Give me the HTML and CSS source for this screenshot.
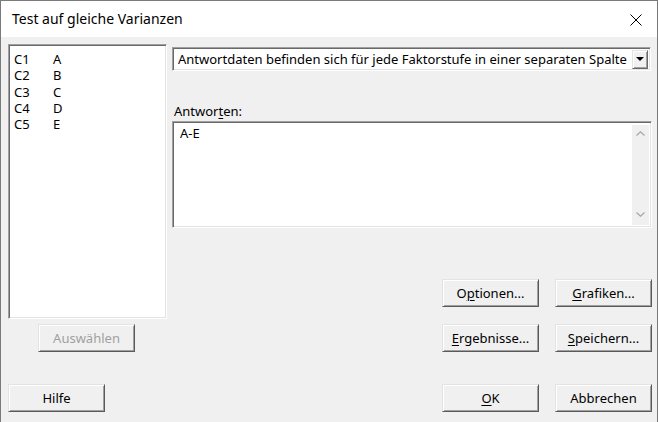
FILE: index.html
```html
<!DOCTYPE html>
<html lang="de">
<head>
<meta charset="utf-8">
<title>Test auf gleiche Varianzen</title>
<link rel="stylesheet" href="styles.css">
</head>
<body>
<div class="window">
  <div class="titlebar">
    <span class="title">Test auf gleiche Varianzen</span>
    <svg class="close" viewBox="0 0 12 12" width="12" height="12"><path d="M0.5 0.5 L11.5 11.5 M11.5 0.5 L0.5 11.5" stroke="#000" stroke-width="1" fill="none"/></svg>
  </div>
  <div class="body">
    <div class="left">
      <div class="list sunken">
        <div class="row"><span class="col">C1</span><span>A</span></div>
        <div class="row"><span class="col">C2</span><span>B</span></div>
        <div class="row"><span class="col">C3</span><span>C</span></div>
        <div class="row"><span class="col">C4</span><span>D</span></div>
        <div class="row"><span class="col">C5</span><span>E</span></div>
      </div>
      <div class="btn disabled select">Auswählen</div>
      <div class="btn help">Hilfe</div>
    </div>
    <div class="right">
      <div class="combo sunken">
        <span class="combo-text">Antwortdaten befinden sich für jede Faktorstufe in einer separaten Spalte</span>
        <span class="drop"><svg viewBox="0 0 8 4" width="8" height="4"><path d="M0 0 H8 L4 4 Z" fill="#000"/></svg></span>
      </div>
      <div class="label">Antwor<u>t</u>en:</div>
      <div class="textarea sunken">
        <div class="ta-text">A-E</div>
        <div class="scroll">
          <svg viewBox="0 0 9 5" width="9" height="5"><path d="M0.5 4.5 L4.5 0.8 L8.5 4.5" stroke="#a6a6a6" stroke-width="1.2" fill="none"/></svg>
          <svg viewBox="0 0 9 5" width="9" height="5"><path d="M0.5 0.5 L4.5 4.2 L8.5 0.5" stroke="#a6a6a6" stroke-width="1.2" fill="none"/></svg>
        </div>
      </div>
      <div class="buttons">
        <div class="btn">O<u>p</u>tionen...</div>
        <div class="btn"><u>G</u>rafiken...</div>
        <div class="btn row2"><u>E</u>rgebnisse...</div>
        <div class="btn row2"><u>S</u>peichern...</div>
        <div class="btn row3"><u>O</u>K</div>
        <div class="btn row3">Abbrechen</div>
      </div>
    </div>
  </div>
</div>
</body>
</html>
```

FILE: styles.css
```css
* { box-sizing: border-box; }

body {
  margin: 0;
  font-family: "Noto Sans", "DejaVu Sans", sans-serif;
  font-size: 13px;
  color: #000;
}

.window {
  width: 658px;
  height: 422px;
  border: 1px solid #7a7a7a;
  border-bottom: none;
  background: #f0f0f0;
  display: flex;
  flex-direction: column;
}

.titlebar {
  height: 36px;
  background: #fff;
  display: flex;
  align-items: center;
  justify-content: space-between;
  padding: 0 15px 0 11px;
}

.title {
  font-size: 14px;
  padding-bottom: 2px;
}

.close { display: block; margin-top: 2px; }

.body {
  flex: 1;
  display: flex;
}

.left {
  width: 171px;
  padding: 7px 0 0 7px;
  display: flex;
  flex-direction: column;
  align-items: flex-start;
}

.sunken {
  background: #fff;
  border: 1px solid;
  border-color: #a0a0a0 #fff #fff #a0a0a0;
  box-shadow: inset 1px 1px 0 #696969, inset -1px -1px 0 #e3e3e3;
}

.list {
  width: 159px;
  height: 275px;
  padding: 6px 0 0 5px;
}

.row {
  display: flex;
  height: 16.25px;
  line-height: 16px;
}

.row .col { width: 39px; }

.btn {
  width: 97px;
  height: 28px;
  display: flex;
  align-items: center;
  justify-content: center;
  background: #f0f0f0;
  border: 1px solid;
  border-color: #e3e3e3 #5a5a5a #5a5a5a #e3e3e3;
  box-shadow: inset 1px 1px 0 #fff, inset -1px -1px 0 #a0a0a0;
  padding-bottom: 1px;
}

.btn u { text-decoration-thickness: 1px; text-underline-offset: 2px; }

.btn.disabled { color: #a0a0a0; }

.select { margin: 5px 0 0 30px; }

.help { margin-top: 32px; }

.right {
  width: 480px;
  padding-top: 10px;
  display: flex;
  flex-direction: column;
}

.combo {
  width: 479px;
  height: 24px;
  display: flex;
  align-items: center;
  justify-content: space-between;
  padding: 0 2px 0 5px;
}

.combo-text { white-space: nowrap; padding-bottom: 1px; }

.drop {
  width: 16px;
  height: 19px;
  display: flex;
  align-items: center;
  justify-content: center;
  background: #f0f0f0;
  border: 1px solid;
  border-color: #e3e3e3 #696969 #696969 #e3e3e3;
  box-shadow: inset 1px 1px 0 #fff, inset -1px -1px 0 #a0a0a0;
}

.label {
  margin-top: 32px;
  height: 16px;
  line-height: 16px;
  padding-left: 2px;
}

.label u { text-underline-offset: 2px; }

.textarea {
  margin-top: 2px;
  width: 480px;
  height: 107px;
  display: flex;
  justify-content: space-between;
  padding: 3px 2px 2px 7px;
}

.ta-text { line-height: 16px; }

.scroll {
  width: 17px;
  background: #f0f0f0;
  display: flex;
  flex-direction: column;
  justify-content: space-between;
  align-items: center;
  padding: 6px 0 8px;
}

.scroll svg { display: block; }

.buttons {
  margin: 51px 0 0 270px;
  display: grid;
  grid-template-columns: 97px 97px;
  column-gap: 16px;
  row-gap: 17px;
}

.buttons .row3 { margin-top: 15px; }
```
